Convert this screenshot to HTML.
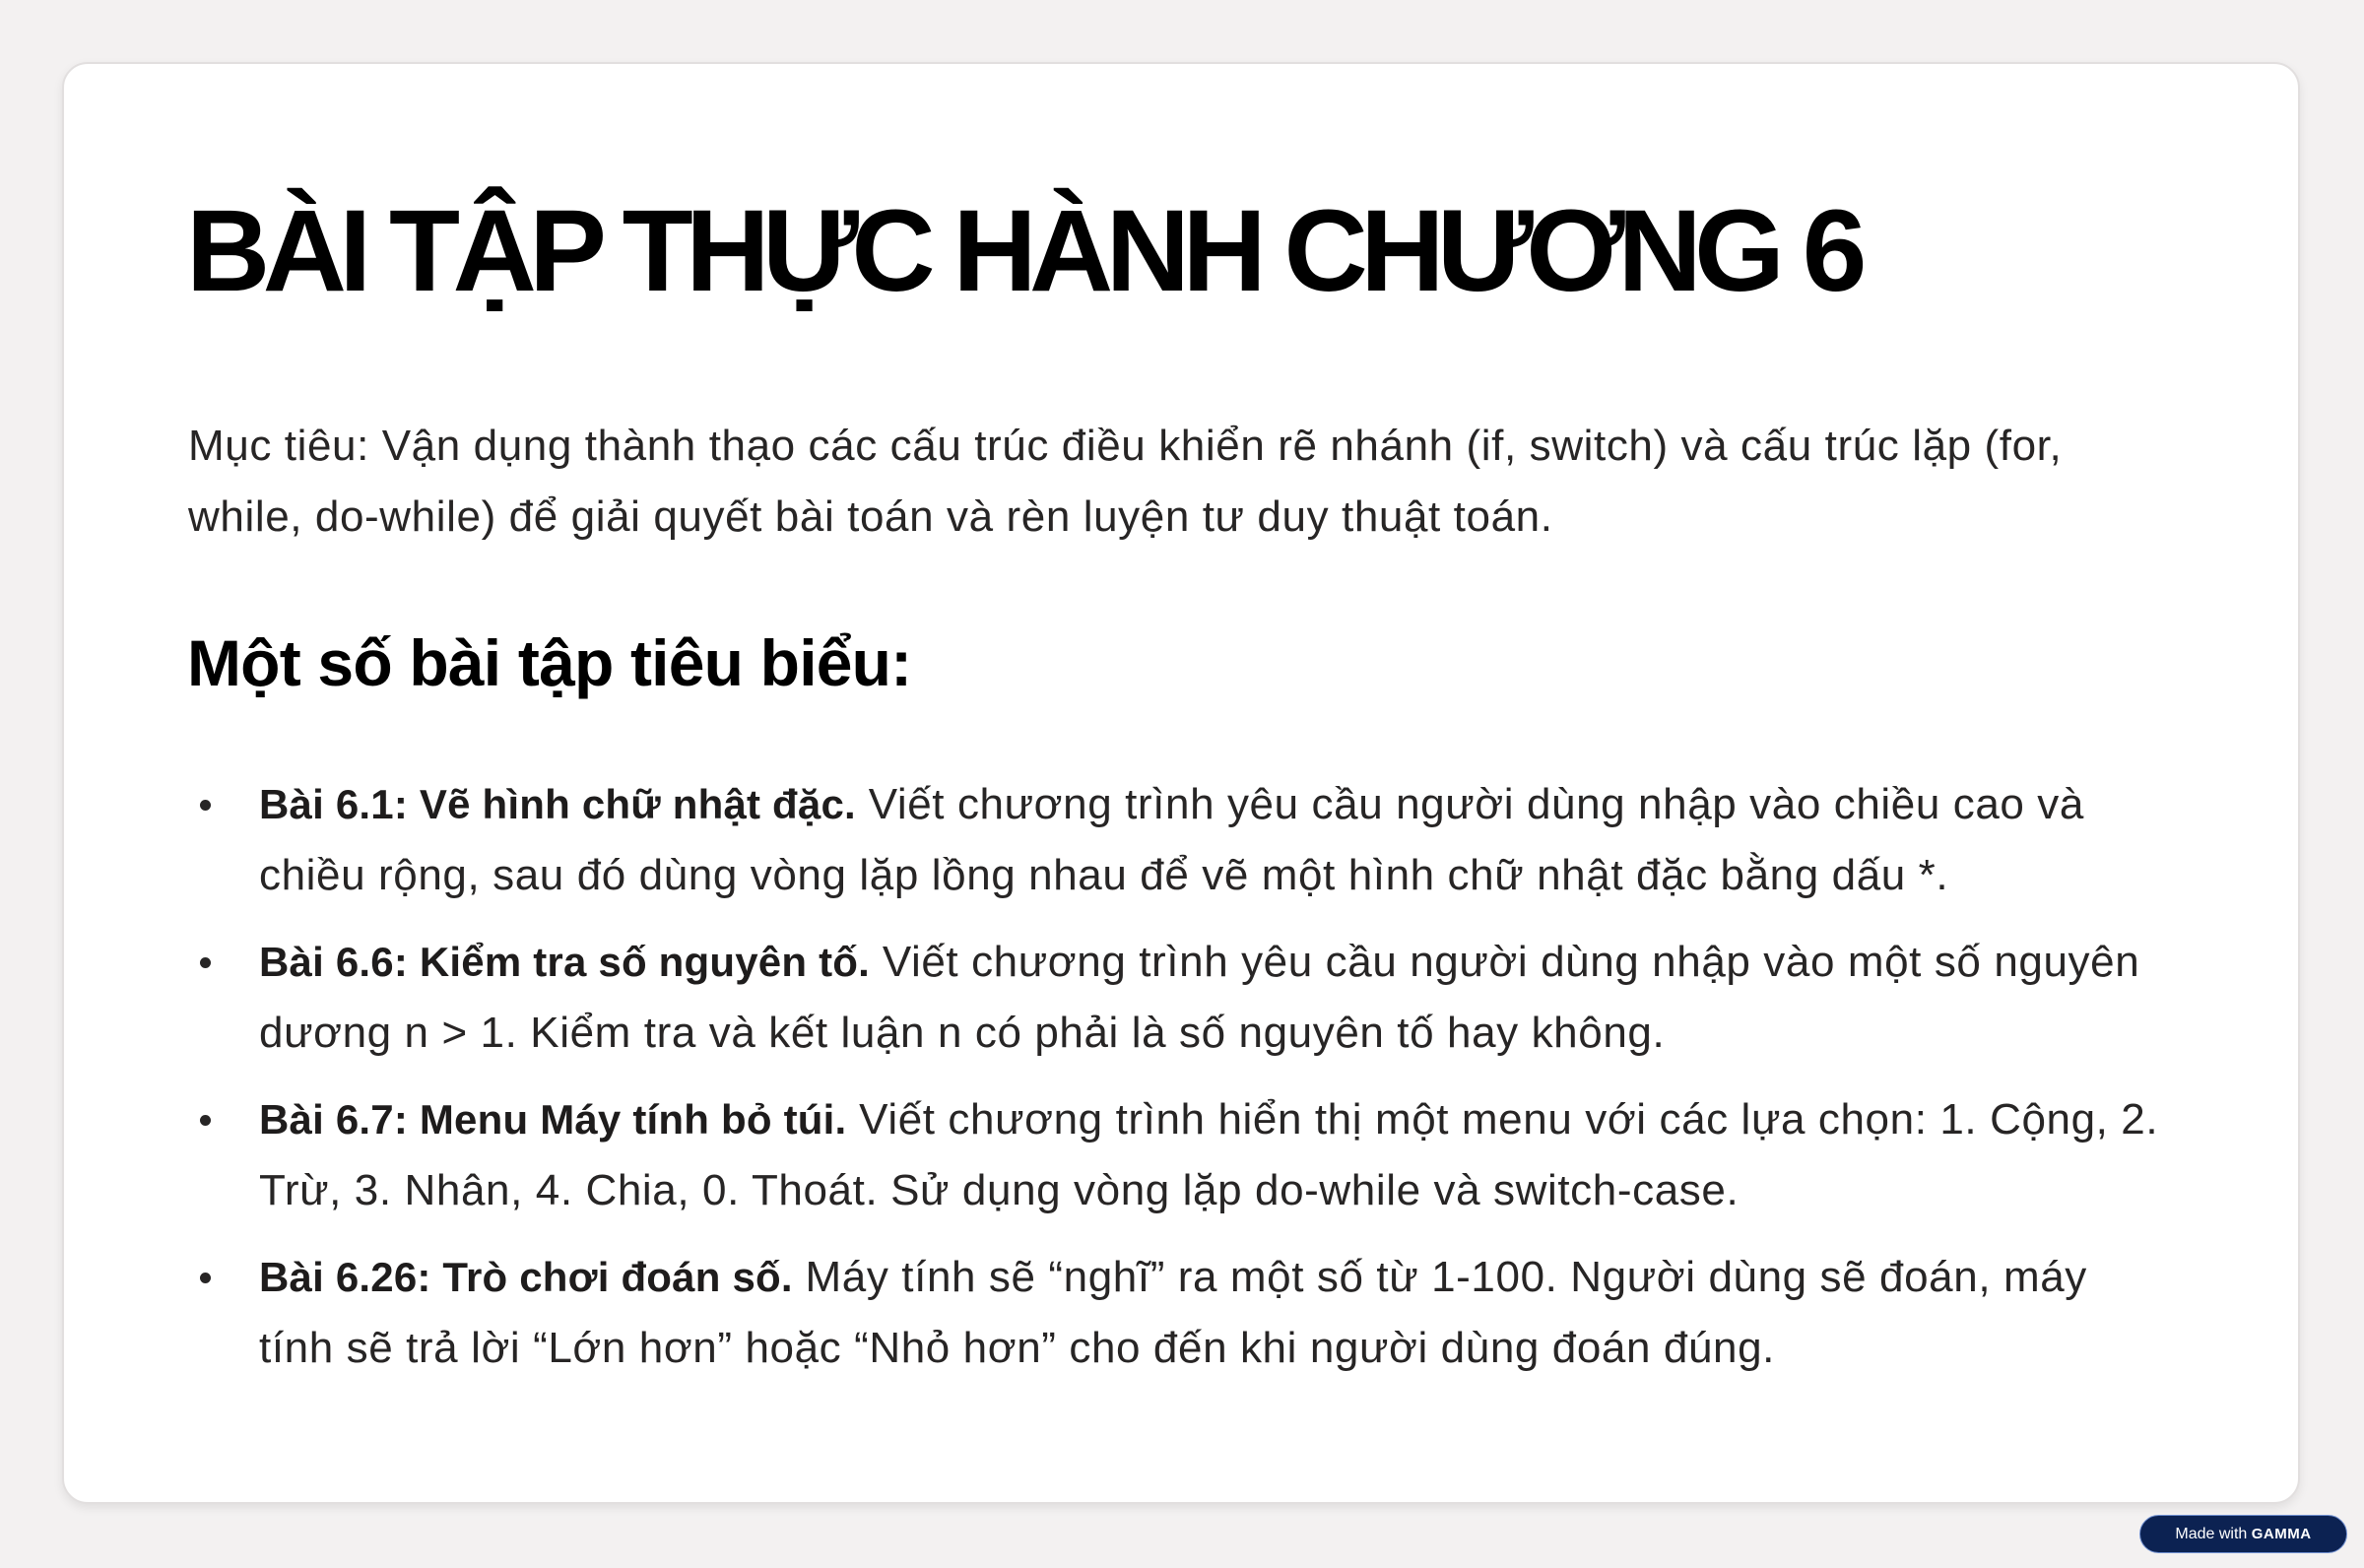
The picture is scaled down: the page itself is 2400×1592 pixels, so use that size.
<!DOCTYPE html>
<html><head><meta charset="utf-8"><style>
html,body{margin:0;padding:0}
body{width:2400px;height:1592px;background:#f3f1f1;position:relative;overflow:hidden;font-family:"Liberation Sans",sans-serif}
.card{position:absolute;left:63px;top:63px;width:2272px;height:1464px;background:#fff;border:2px solid #e2dfdf;border-radius:26px;box-shadow:0 4px 10px rgba(0,0,0,0.08);box-sizing:border-box}
h1{position:absolute;left:189px;top:180px;margin:0;font-size:118px;font-weight:700;color:#000;line-height:150px;letter-spacing:-7.5px;white-space:nowrap}
.p{position:absolute;left:191px;top:417px;font-size:44px;line-height:72px;color:#272525;margin:0;letter-spacing:0.6px;white-space:nowrap}
h2{position:absolute;left:190px;top:628px;margin:0;font-size:66px;font-weight:700;line-height:90px;color:#000;letter-spacing:-0.8px;white-space:nowrap}
ul{position:absolute;left:191px;top:781px;margin:0;padding:0;list-style:none;font-size:44px;line-height:72px;color:#272525;letter-spacing:0.6px;white-space:nowrap}
li{position:relative;padding-left:72px;margin-bottom:16px}
li:before{content:"";position:absolute;left:12px;top:31px;width:11px;height:11px;border-radius:50%;background:#272525}
b{font-weight:700;color:#1e1c1c;letter-spacing:0.2px;font-size:42px}
.badge{position:absolute;left:2172px;top:1538px;width:211px;height:39px;border-radius:20px;background:#0c2252;border:1px solid #6f8fd0;box-sizing:border-box;color:#fff;font-size:16px;line-height:37px;text-align:center;letter-spacing:0}
.badge b{color:#fff;font-weight:900;letter-spacing:.5px;font-size:15px}
</style></head><body>
<div class="card"></div>
<h1>BÀI TẬP THỰC HÀNH CHƯƠNG 6</h1>
<p class="p">Mục tiêu: Vận dụng thành thạo các cấu trúc điều khiển rẽ nhánh (if, switch) và cấu trúc lặp (for,<br>while, do-while) để giải quyết bài toán và rèn luyện tư duy thuật toán.</p>
<h2>Một số bài tập tiêu biểu:</h2>
<ul>
<li><b>Bài 6.1: Vẽ hình chữ nhật đặc.</b> Viết chương trình yêu cầu người dùng nhập vào chiều cao và<br>chiều rộng, sau đó dùng vòng lặp lồng nhau để vẽ một hình chữ nhật đặc bằng dấu *.</li>
<li><b>Bài 6.6: Kiểm tra số nguyên tố.</b> Viết chương trình yêu cầu người dùng nhập vào một số nguyên<br>dương n &gt; 1. Kiểm tra và kết luận n có phải là số nguyên tố hay không.</li>
<li><b>Bài 6.7: Menu Máy tính bỏ túi.</b> Viết chương trình hiển thị một menu với các lựa chọn: 1. Cộng, 2.<br>Trừ, 3. Nhân, 4. Chia, 0. Thoát. Sử dụng vòng lặp do-while và switch-case.</li>
<li><b>Bài 6.26: Trò chơi đoán số.</b> Máy tính sẽ “nghĩ” ra một số từ 1-100. Người dùng sẽ đoán, máy<br>tính sẽ trả lời “Lớn hơn” hoặc “Nhỏ hơn” cho đến khi người dùng đoán đúng.</li>
</ul>
<div class="badge">Made with <b>GAMMA</b></div>
</body></html>
